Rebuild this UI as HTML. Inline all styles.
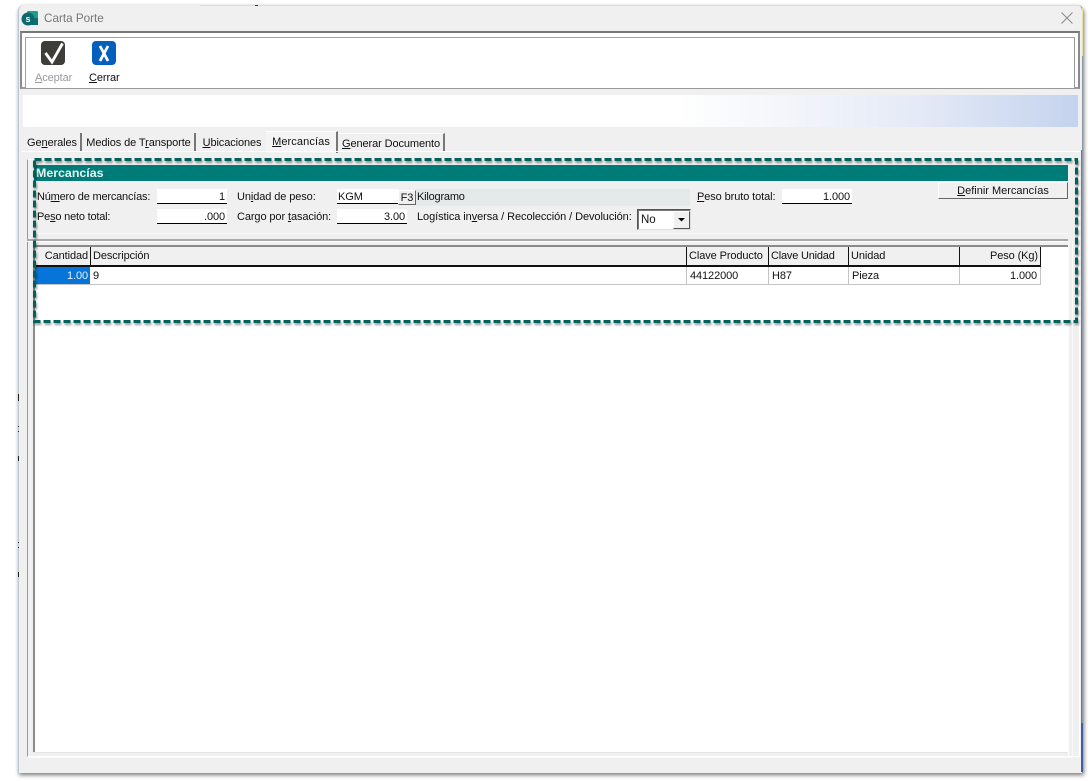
<!DOCTYPE html>
<html><head><meta charset="utf-8"><style>
html,body{margin:0;padding:0;background:#fff;width:1092px;height:781px;overflow:hidden}
body{position:relative;font-family:"Liberation Sans",sans-serif;font-size:11px;color:#111;letter-spacing:-.1px}
div,span.a{position:absolute;box-sizing:border-box}
.t{white-space:nowrap;line-height:13px}
.f{background:#fff;border-bottom:1px solid #000;height:15px;text-align:right;padding-right:2px;line-height:16px}
.h{top:247px;height:18px;background:#f0f0f0;line-height:19px;padding:0 2px;border-right:1px solid #111;white-space:nowrap}
.c{top:266px;height:18px;background:#fff;line-height:18px;padding:0 3px;border-right:1px solid #c4c4c4;white-space:nowrap}
.tab{top:133px;height:18px;line-height:21px;white-space:nowrap;border-right:2px solid #777;text-align:center}
.k{left:18px;width:1px;background:#222}
</style></head><body>
<div style="left:18px;top:5px;width:1065px;height:768px;background:#f0f0f0;border-radius:6px 6px 0 0;box-shadow:1px 2px 4px #777;border-left:1px solid #b9c7d6;border-right:1px solid #8d99a8"></div>
<div style="left:200px;top:5px;width:878px;height:1px;background:#e6e2b4"></div>
<div style="left:255px;top:5px;width:3px;height:1px;background:#333"></div>
<div style="left:1082px;top:8px;width:1px;height:48px;background:#e6e2a0"></div>
<div style="left:1081px;top:723px;width:2px;height:49px;background:#3d5fa5"></div>
<div class="k" style="top:394px;height:7px"></div>
<div class="k" style="top:426px;height:1px"></div>
<div class="k" style="top:431px;height:1px"></div>
<div class="k" style="top:456px;height:5px"></div>
<div class="k" style="top:542px;height:1px"></div>
<div class="k" style="top:547px;height:1px"></div>
<div class="k" style="top:572px;height:5px"></div>
<svg style="position:absolute;left:21px;top:10px" width="18" height="17" viewBox="0 0 18 17"><rect x="6" y="1" width="11" height="14" rx="1.500" fill="#1f9e8e"/><rect x="6" y="8" width="11" height="7" fill="#0e6f73"/><circle cx="7" cy="9" r="6.500" fill="#0c6a6e"/><text x="7" y="12" font-size="9" font-weight="bold" fill="#fff" text-anchor="middle" font-family="Liberation Sans">s</text></svg>
<div class="t" style="left:44px;top:12px;font-size:11.7px;color:#777;letter-spacing:0">Carta Porte</div>
<svg style="position:absolute;left:1061px;top:12px" width="12" height="12"><path d="M.5.500 11.500 11.500M11.500.500.500 11.500" stroke="#8a8a8a" stroke-width="1" fill="none"/></svg>

<div style="left:20px;top:31px;width:1060px;height:58px;background:#fff;border:2px solid #8b8b8b;border-top-color:#777;border-bottom-color:#999"></div>
<div style="left:25px;top:37px;width:1050px;height:51px;background:#fff;border:1px solid #a0a0a0;border-right-color:#999;border-bottom:0"></div>
<svg style="position:absolute;left:41px;top:41px" width="25" height="25"><rect width="24" height="24" rx="4" fill="#3e3d37"/><path d="M4.500 12 11 21 21.500 2.500" stroke="#fff" stroke-width="2.800" fill="none"/></svg>
<svg style="position:absolute;left:92px;top:41px" width="25" height="25"><rect width="24" height="24" rx="4" fill="#0560bd"/><path d="M8 5 16 20M16 5 8 20" stroke="#fff" stroke-width="2.800" fill="none"/></svg>
<div class="t" style="left:35px;top:71px;color:#9a9a9a;line-height:14px"><u>A</u>ceptar</div>
<div class="t" style="left:89px;top:71px;color:#111;line-height:14px"><u>C</u>errar</div>

<div style="left:23px;top:95px;width:1055px;height:32px;background:linear-gradient(90deg,#fff 0,#fff 62%,#e4eaf6 85%,#c4d3ee 100%)"></div>

<div style="left:22px;top:131px;width:316px;height:21px;background:#f0f0f0"></div>
<div class="tab" style="left:24px;width:58px"><span>Ge<u>n</u>erales</span></div>
<div class="tab" style="left:83px;width:113px">Medios de T<u>r</u>ansporte</div>
<div class="tab" style="left:198px;width:68px;border-right:0"><u>U</u>bicaciones</div>
<div style="left:266px;top:131px;width:72px;height:22px;background:#f4f4f4;border-top:1px solid #fff;border-right:2px solid #777;text-align:center;line-height:20px;white-space:nowrap;letter-spacing:.1px"><u>M</u>ercancías</div>
<div class="tab" style="left:339px;width:106px;border-top:1px solid #fff"><u>G</u>enerar Documento</div>
<div style="left:22px;top:151px;width:1058px;height:1px;background:#fff"></div>

<div style="left:27px;top:159px;width:1053px;height:598px;border-left:1px solid #999;border-top:1px solid #fff;border-right:1px solid #fff;border-bottom:1px solid #fff"></div>
<div style="left:1081px;top:150px;width:1px;height:573px;background:#7a7a7a"></div>

<div style="left:34px;top:165px;width:1034px;height:16px;background:#007c78"></div>
<div class="t" style="left:36px;top:166px;font-size:12.400px;font-weight:bold;color:#e6f4f2;line-height:15px;letter-spacing:0">Mercancías</div>

<div class="t" style="left:37px;top:191px;letter-spacing:-.2px">Nú<u>m</u>ero de mercancías:</div>
<div class="f" style="left:157px;top:189px;width:70px">1</div>
<div class="t" style="left:237px;top:191px">Un<u>i</u>dad de peso:</div>
<div class="f" style="left:337px;top:189px;width:61px;text-align:left;padding-left:1px">KGM</div>
<div style="left:398px;top:190px;width:18px;height:15px;background:#f0f0f0;border:1px solid #fff;border-right:1px solid #666;border-bottom:1px solid #666;text-align:center;line-height:15px">F3</div>
<div style="left:416px;top:189px;width:274px;height:17px;background:#e4e9ea;line-height:16px;padding-left:1px;letter-spacing:-.2px">Kilogramo</div>
<div class="t" style="left:697px;top:191px"><u>P</u>eso bruto total:</div>
<div class="f" style="left:782px;top:189px;width:70px">1.000</div>
<div style="left:938px;top:182px;width:130px;height:17px;background:#f0f0f0;border:1px solid #fff;border-right:1px solid #666;border-bottom:1px solid #666;text-align:center;line-height:16px;letter-spacing:0"><u>D</u>efinir Mercancías</div>

<div class="t" style="left:37px;top:211px;letter-spacing:-.2px">Pe<u>s</u>o neto total:</div>
<div class="f" style="left:157px;top:209px;width:70px">.000</div>
<div class="t" style="left:237px;top:211px">Cargo por <u>t</u>asación:</div>
<div class="f" style="left:337px;top:209px;width:70px">3.00</div>
<div class="t" style="left:417px;top:211px;letter-spacing:-.08px">Logística in<u>v</u>ersa / Recolección / Devolución:</div>
<div style="left:637px;top:209px;width:54px;height:21px;background:#fff;border:1px solid;border-color:#555 #ddd #ddd #555;box-shadow:inset 1px 1px 0 #777;line-height:20px;font-size:11.500px;padding-left:3px">No</div>
<div style="left:673px;top:211px;width:17px;height:18px;background:#f0f0f0;border:1px solid #fff;border-right:1px solid #555;border-bottom:1px solid #555"></div>
<svg style="position:absolute;left:678px;top:218px" width="7" height="4"><path d="M0 0H7L3.500 3.500Z" fill="#000"/></svg>
<div style="left:34px;top:233px;width:1034px;height:1px;background:#fafafa"></div>

<div style="left:27px;top:239px;width:1041px;height:2px;background:#aaa"></div>
<div style="left:27px;top:241px;width:1041px;height:1px;background:#fff"></div>
<div style="left:33px;top:245px;width:1035px;height:507px;background:#fff;border-left:2px solid #8a8a8a;border-top:2px solid #8a8a8a"></div>
<div style="left:1068px;top:241px;width:1px;height:515px;background:#fdfdfd"></div>
<div style="left:1072px;top:241px;width:1px;height:516px;background:#fafafa"></div>
<div style="left:33px;top:752px;width:1035px;height:1px;background:#e6e6e6"></div>
<div style="left:28px;top:757px;width:1045px;height:1px;background:#fafafa"></div>

<div style="left:35px;top:265px;width:1006px;height:2px;background:#111"></div>
<div class="h" style="left:35px;width:56px;text-align:right">Cantidad</div>
<div class="h" style="left:91px;width:596px">Descripción</div>
<div class="h" style="left:687px;width:82px">Clave Producto</div>
<div class="h" style="left:769px;width:80px;letter-spacing:-.2px">Clave Unidad</div>
<div class="h" style="left:849px;width:111px">Unidad</div>
<div class="h" style="left:960px;width:81px;text-align:right">Peso (Kg)</div>
<div class="c" style="left:35px;top:267px;height:17px;text-align:right;background:#0674d8;color:#e8f2fb;border:0;padding-right:2px;width:55px">1.00</div>
<div class="c" style="left:90px;top:267px;height:17px;width:597px;padding-left:3px">9</div>
<div class="c" style="left:687px;top:267px;height:17px;width:82px">44122000</div>
<div class="c" style="left:769px;top:267px;height:17px;width:80px">H87</div>
<div class="c" style="left:849px;top:267px;height:17px;width:111px">Pieza</div>
<div class="c" style="left:960px;top:267px;height:17px;width:81px;text-align:right">1.000</div>
<div style="left:35px;top:284px;width:1006px;height:1px;background:#c4c4c4"></div>

<svg style="position:absolute;left:0;top:0" width="1092" height="781"><defs><filter id="s" x="-2%" y="-5%" width="104%" height="110%"><feDropShadow dx="1" dy="2" stdDeviation="1" flood-color="#000" flood-opacity=".4"/></filter></defs><rect x="34.500" y="159.500" width="1042" height="162" fill="none" stroke="#04605c" stroke-width="3" stroke-dasharray="7 3" filter="url(#s)"/></svg>
</body></html>
